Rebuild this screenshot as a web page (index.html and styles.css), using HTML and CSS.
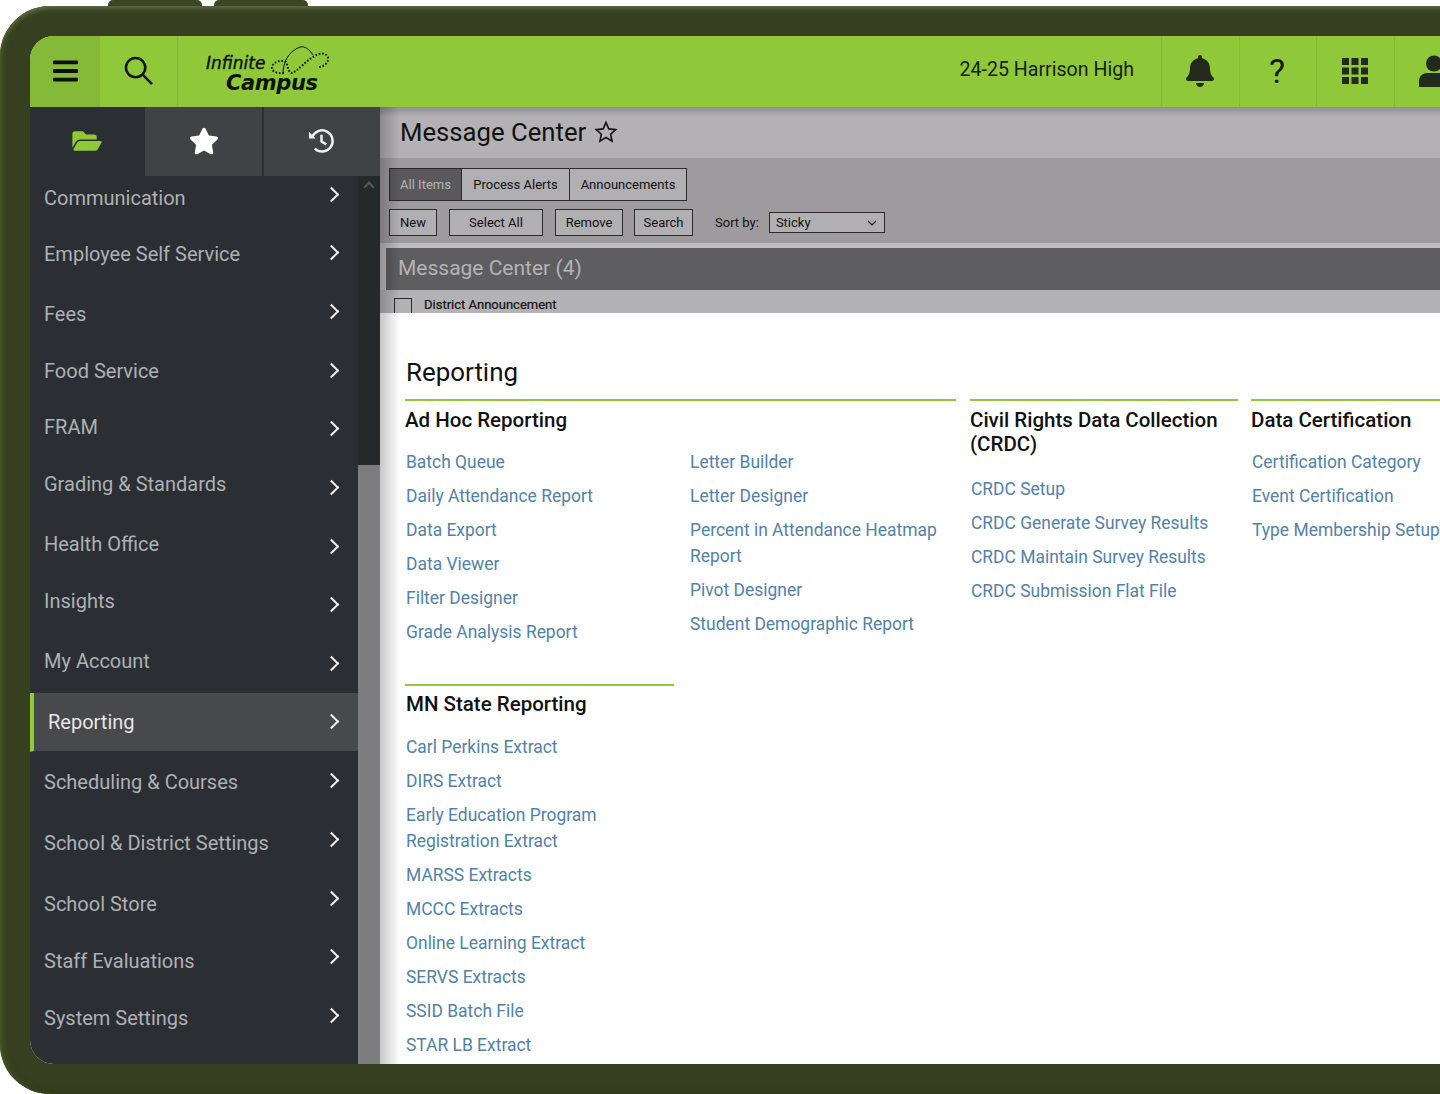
FILE: index.html
```html
<!DOCTYPE html>
<html lang="en">

<head>
    <meta charset="UTF-8">
    <meta name="viewport" content="width=device-width, initial-scale=1.0">
    <title>Infinite Campus - Reporting</title>
    <link rel="stylesheet" href="styles.css">
</head>

<body>
    <div class="notches">
        <span class="notch"></span>
        <span class="notch"></span>
    </div>
    <div class="device">
        <div class="screen">
            <header class="topbar">
                <div class="top-menu">
                    <svg class="ico-burger" viewBox="0 0 26 22"><rect width="26" height="4" rx="1" /><rect y="9" width="26" height="4" rx="1" /><rect y="18" width="26" height="4" rx="1" /></svg>
                </div>
                <div class="top-search">
                    <svg class="ico-search" viewBox="0 0 30 30"><circle cx="12" cy="12" r="10" /><path d="M19 19 L29 29" /></svg>
                </div>
                <div class="logo">
                    <div class="logo-text">
                        <span class="logo-top">Infinite</span>
                        <span class="logo-bottom">Campus</span>
                    </div>
                    <svg class="logo-loop" viewBox="0 0 62 34">
                        <path class="loop-solid" d="M14 28 C14 18 18 6 31 1 C36 0 40 3 44 9" />
                        <path class="loop-dots" d="M15 27 C8 28 2 25 3 21 C4 16 12 13 17 16 C19 18 18 24 22 27 C28 27 38 12 50 8 C56 6 60 10 59 14 C58 18 54 21 49 21" />
                    </svg>
                </div>
                <div class="school">24-25 Harrison High</div>
                <div class="top-cell">
                    <svg class="ico-bell" viewBox="0 0 448 512"><path d="M224 512c35.32 0 63.97-28.65 63.97-64H160.03c0 35.35 28.65 64 63.97 64zm215.39-149.71c-19.32-20.76-55.47-51.99-55.47-154.29 0-77.7-54.48-139.9-127.94-155.16V32c0-17.67-14.32-32-31.98-32s-31.98 14.33-31.98 32v20.84C118.56 68.1 64.08 130.3 64.08 208c0 102.3-36.15 133.53-55.47 154.29-6 6.45-8.66 14.16-8.61 21.71.11 16.4 12.98 32 32.1 32h383.8c19.12 0 32-15.6 32.1-32 .05-7.55-2.61-15.27-8.61-21.71z" /></svg>
                </div>
                <div class="top-cell help">?</div>
                <div class="top-cell">
                    <svg class="ico-grid" viewBox="0 0 26 26">
                        <rect width="7" height="7" /><rect x="9.5" width="7" height="7" /><rect x="19" width="7" height="7" />
                        <rect y="9.5" width="7" height="7" /><rect x="9.5" y="9.5" width="7" height="7" /><rect x="19" y="9.5" width="7" height="7" />
                        <rect y="19" width="7" height="7" /><rect x="9.5" y="19" width="7" height="7" /><rect x="19" y="19" width="7" height="7" />
                    </svg>
                </div>
                <div class="top-cell user">
                    <svg class="ico-user" viewBox="0 0 32 32"><circle cx="16" cy="8.5" r="8" /><path d="M1 32 V26 C1 21 5 18 9 18 H23 C27 18 31 21 31 26 V32 Z" /></svg>
                </div>
            </header>

            <div class="content">
                <aside class="sidebar">
                    <div class="side-tabs">
                        <div class="side-tab active">
                            <svg class="ico-folder" viewBox="0 0 576 512"><path d="M572.694 292.093L500.27 416.248A63.997 63.997 0 0 1 444.989 448H45.025c-18.523 0-30.064-20.093-20.731-36.093l72.424-124.155A64 64 0 0 1 152 256h399.964c18.523 0 30.064 20.093 20.73 36.093zM152 224h328v-48c0-26.51-21.49-48-48-48H272l-64-64H48C21.49 64 0 85.49 0 112v278.046l69.077-118.418C86.214 242.25 117.989 224 152 224z" /></svg>
                        </div>
                        <div class="side-tab fav">
                            <svg class="ico-star" viewBox="0 0 576 512"><path d="M259.3 17.8L194 150.2 47.9 171.5c-26.2 3.8-36.7 36.1-17.7 54.6l105.7 103-25 145.5c-4.5 26.3 23.2 46 46.4 33.7L288 439.6l130.7 68.7c23.2 12.2 50.9-7.4 46.4-33.7l-25-145.5 105.7-103c19-18.5 8.5-50.8-17.7-54.6L382 150.2 316.7 17.8c-11.7-23.6-45.6-23.9-57.4 0z" /></svg>
                        </div>
                        <div class="side-tab recent">
                            <svg class="ico-history" viewBox="0 0 28 28">
                                <path class="hist-line" d="M4.5 10 A11 11 0 1 1 7 22.5" />
                                <path class="hist-arrow" d="M1 5 L1 12 L8 12 Z" />
                                <path class="hist-line" d="M14 8 V15 L19 18" />
                            </svg>
                        </div>
                    </div>
                    <div class="side-body">
                        <nav class="menu">
                            <a class="menu-row first"><span class="shift-p3">Communication</span><i class="chev"></i></a>
                            <a class="menu-row"><span class="shift-p1">Employee Self Service</span><i class="chev"></i></a>
                            <a class="menu-row"><span class="shift-p3">Fees</span><i class="chev"></i></a>
                            <a class="menu-row"><span class="shift-p1">Food Service</span><i class="chev"></i></a>
                            <a class="menu-row"><span class="shift-m2">FRAM</span><i class="chev"></i></a>
                            <a class="menu-row"><span class="shift-m3">Grading &amp; Standards</span><i class="chev"></i></a>
                            <a class="menu-row"><span class="shift-m2">Health Office</span><i class="chev"></i></a>
                            <a class="menu-row"><span class="shift-m4">Insights</span><i class="chev"></i></a>
                            <a class="menu-row"><span class="shift-m3">My Account</span><i class="chev"></i></a>
                            <a class="menu-row current"><span>Reporting</span><i class="chev"></i></a>
                            <a class="menu-row"><span class="shift-p1">Scheduling &amp; Courses</span><i class="chev"></i></a>
                            <a class="menu-row"><span class="shift-p3">School &amp; District Settings</span><i class="chev"></i></a>
                            <a class="menu-row"><span class="shift-p6">School Store</span><i class="chev"></i></a>
                            <a class="menu-row"><span class="shift-p4">Staff Evaluations</span><i class="chev"></i></a>
                            <a class="menu-row"><span class="shift-p2">System Settings</span><i class="chev"></i></a>
                        </nav>
                        <div class="side-scroll">
                            <div class="scroll-thumb"><i class="scroll-up"></i></div>
                        </div>
                    </div>
                </aside>

                <main class="main">
                    <!-- greyed out message center behind the panel -->
                    <section class="messages">
                        <div class="msg-title">
                            <span>Message Center</span>
                            <svg class="ico-star-line" viewBox="0 0 24 24"><path d="M12 2.5 L14.8 8.9 L21.8 9.6 L16.6 14.2 L18.1 21.1 L12 17.5 L5.9 21.1 L7.4 14.2 L2.2 9.6 L9.2 8.9 Z" /></svg>
                        </div>
                        <div class="msg-tools">
                            <div class="msg-tabs">
                                <span class="msg-tab selected">All Items</span>
                                <span class="msg-tab t-alerts">Process Alerts</span>
                                <span class="msg-tab t-news">Announcements</span>
                            </div>
                            <div class="msg-actions">
                                <button class="btn b-new">New</button>
                                <button class="btn b-all">Select All</button>
                                <button class="btn b-remove">Remove</button>
                                <button class="btn b-search">Search</button>
                                <span class="sort-label">Sort by:</span>
                                <div class="sort-select">
                                    <span>Sticky</span>
                                    <svg class="ico-caret" viewBox="0 0 10 6"><path d="M1 1 L5 5 L9 1" /></svg>
                                </div>
                            </div>
                        </div>
                        <div class="msg-bar">Message Center (4)</div>
                        <div class="msg-row">
                            <span class="msg-check"></span>
                            <span>District Announcement</span>
                        </div>
                    </section>

                    <section class="report">
                        <h1 class="report-title">Reporting</h1>
                        <div class="report-cols">
                            <div class="group-wide">
                                <div class="block">
                                    <h2 class="block-head">Ad Hoc Reporting</h2>
                                    <div class="two-cols">
                                        <ul class="links">
                                            <li><a>Batch Queue</a></li>
                                            <li><a>Daily Attendance Report</a></li>
                                            <li><a>Data Export</a></li>
                                            <li><a>Data Viewer</a></li>
                                            <li><a>Filter Designer</a></li>
                                            <li><a>Grade Analysis Report</a></li>
                                        </ul>
                                        <ul class="links">
                                            <li><a>Letter Builder</a></li>
                                            <li><a>Letter Designer</a></li>
                                            <li><a>Percent in Attendance Heatmap Report</a></li>
                                            <li><a>Pivot Designer</a></li>
                                            <li><a>Student Demographic Report</a></li>
                                        </ul>
                                    </div>
                                </div>
                                <div class="block block-mn">
                                    <h2 class="block-head">MN State Reporting</h2>
                                    <ul class="links links-mn">
                                        <li><a>Carl Perkins Extract</a></li>
                                        <li><a>DIRS Extract</a></li>
                                        <li><a>Early Education Program Registration Extract</a></li>
                                        <li><a>MARSS Extracts</a></li>
                                        <li><a>MCCC Extracts</a></li>
                                        <li><a>Online Learning Extract</a></li>
                                        <li><a>SERVS Extracts</a></li>
                                        <li><a>SSID Batch File</a></li>
                                        <li><a>STAR LB Extract</a></li>
                                    </ul>
                                </div>
                            </div>
                            <div class="block block-crdc">
                                <h2 class="block-head">Civil Rights Data Collection (CRDC)</h2>
                                <ul class="links links-crdc">
                                    <li><a>CRDC Setup</a></li>
                                    <li><a>CRDC Generate Survey Results</a></li>
                                    <li><a>CRDC Maintain Survey Results</a></li>
                                    <li><a>CRDC Submission Flat File</a></li>
                                </ul>
                            </div>
                            <div class="block block-cert">
                                <h2 class="block-head">Data Certification</h2>
                                <ul class="links">
                                    <li><a>Certification Category</a></li>
                                    <li><a>Event Certification</a></li>
                                    <li><a>Type Membership Setup</a></li>
                                </ul>
                            </div>
                        </div>
                    </section>
                </main>
            </div>
        </div>
    </div>
</body>

</html>
```
FILE: styles.css
```css
* {
    box-sizing: border-box;
}

html,
body {
    margin: 0;
    height: 1094px;
    overflow: hidden;
    background-color: #fff;
}

body {
    font-family: 'Roboto', 'Liberation Sans', sans-serif;
    width: 1440px;
}

/* tablet frame */
.notches {
    display: flex;
    gap: 12px;
    height: 6px;
    padding-left: 108px;
}

.notch {
    width: 94px;
    height: 6px;
    background-color: #3b4722;
    border-top-left-radius: 5px;
    border-top-right-radius: 5px;
}

.device {
    width: 1520px;
    height: 1088px;
    padding: 30px;
    background-color: #364020;
    border-radius: 50px;
    box-shadow: inset 0 5px 4px -2px #5c6644, inset 4px 0 6px -2px #4b5c26, inset 0 -5px 6px -3px #2b3318;
}

.screen {
    display: flex;
    flex-direction: column;
    height: 1028px;
    background-color: #fff;
    border-radius: 24px 0 0 24px;
    overflow: hidden;
}

/* top green bar */
.topbar {
    display: flex;
    align-items: stretch;
    flex: 0 0 71px;
    background-color: #8fc93a;
}

.top-menu {
    display: flex;
    align-items: center;
    justify-content: center;
    width: 70px;
    padding: 0 0 2px 1px;
    background-color: #84ba38;
}

.ico-burger {
    width: 25px;
    height: 22px;
    fill: #0b0f05;
}

.top-search {
    display: flex;
    align-items: center;
    justify-content: center;
    width: 78px;
    padding: 0 0 2px 0;
    border-right: 1px solid #84ba38;
}

.ico-search {
    width: 29px;
    height: 29px;
    fill: none;
    stroke: #0f1408;
    stroke-width: 2.6;
}

.logo {
    display: flex;
    width: 160px;
    padding: 9px 0 0 28px;
    position: relative;
}

.logo-text {
    display: flex;
    flex-direction: column;
    font-family: 'DejaVu Sans', sans-serif;
    font-style: italic;
    color: #0d1206;
}

.logo-top {
    font-size: 17px;
    line-height: 18px;
    padding-top: 9px;
    -webkit-text-stroke: 0.4px #0d1206;
}

.logo-bottom {
    font-size: 21px;
    line-height: 22px;
    font-weight: bold;
    padding-left: 20px;
    letter-spacing: -0.4px;
}

.logo-loop {
    position: absolute;
    left: 91px;
    top: 10px;
    width: 62px;
    height: 34px;
    fill: none;
    stroke: #0d1206;
}

.loop-solid {
    stroke-width: 1;
}

.loop-dots {
    stroke-width: 2;
    stroke-dasharray: 1.6 1.8;
}

.school {
    display: flex;
    align-items: center;
    justify-content: flex-end;
    width: 823px;
    padding: 0 27px 4px 0;
    font-size: 19.6px;
    color: #162008;
}

.top-cell {
    display: flex;
    align-items: center;
    justify-content: center;
    width: 78px;
    padding: 0 2px 2px 0;
    border-left: 1px solid #84ba38;
    color: #14190c;
}

.help {
    font-size: 34px;
    width: 77px;
}

.ico-bell {
    width: 28px;
    height: 32px;
    fill: #23291b;
}

.ico-grid {
    width: 26px;
    height: 26px;
    fill: #23291b;
}

.user {
    justify-content: flex-start;
    padding-left: 23px;
    width: 60px;
}

.ico-user {
    flex: 0 0 32px;
    width: 32px;
    height: 32px;
    fill: #23291b;
}

/* below the bar */
.content {
    display: flex;
    flex: 1;
    min-height: 0;
}

.sidebar {
    display: flex;
    flex-direction: column;
    width: 350px;
    background-color: #2b2f33;
}

.side-tabs {
    display: flex;
    flex: 0 0 69px;
}

.side-tab {
    display: flex;
    align-items: center;
    justify-content: center;
    padding-bottom: 2px;
    background-color: #404245;
}

.side-tab.active {
    width: 115px;
    padding-right: 2px;
    background-color: #2b2f33;
}

.side-tab.fav {
    width: 117px;
}

.side-tab.recent {
    width: 116px;
    margin-left: 2px;
    padding-right: 2px;
}

.ico-folder {
    width: 30px;
    height: 26px;
    fill: #8fc93a;
}

.ico-star {
    width: 30px;
    height: 28px;
    fill: #fff;
}

.ico-history {
    width: 27px;
    height: 27px;
}

.hist-line {
    fill: none;
    stroke: #eee;
    stroke-width: 2.6;
}

.hist-arrow {
    fill: #eee;
}

.side-body {
    display: flex;
    flex: 1;
    min-height: 0;
}

.menu {
    display: flex;
    flex-direction: column;
    width: 328px;
}

.menu-row {
    display: flex;
    align-items: center;
    justify-content: space-between;
    flex: 0 0 58.7px;
    padding: 0 19px 0 14px;
    font-size: 20px;
    color: #aeb1b3;
}

.menu-row.first {
    flex-basis: 47.35px;
    padding-bottom: 10px;
}

.menu-row.current {
    padding-left: 14px;
    border-left: 4px solid #8fc93a;
    border-bottom: 1.5px solid #2b2f33;
    background-color: #48494b;
    color: #e6e6e6;
}

/* labels do not sit quite level with their arrows */
.shift-p1 {
    margin-top: 2px;
}

.shift-p2 {
    margin-top: 4px;
}

.shift-p3 {
    margin-top: 6px;
}

.shift-p4 {
    margin-top: 8px;
}

.shift-p6 {
    margin-top: 12px;
}

.shift-m2 {
    margin-bottom: 4px;
}

.shift-m3 {
    margin-bottom: 6px;
}

.shift-m4 {
    margin-bottom: 8px;
}

.chev {
    width: 11px;
    height: 11px;
    margin-right: 2px;
    border-top: 2.5px solid #f1f1f1;
    border-right: 2.5px solid #f1f1f1;
    transform: rotate(45deg);
}

.side-scroll {
    width: 22px;
    background-color: #7d7c7e;
}

.scroll-thumb {
    display: flex;
    justify-content: center;
    height: 289px;
    padding-top: 7px;
    background-color: #25292b;
}

.scroll-up {
    width: 8px;
    height: 8px;
    margin-top: 0;
    border-top: 2px solid #55585a;
    border-left: 2px solid #55585a;
    transform: rotate(45deg);
}

/* main area */
.main {
    flex: 1;
    min-width: 0;
    position: relative;
    overflow: hidden;
}

.main::after {
    content: "";
    position: absolute;
    top: 0;
    left: 0;
    bottom: 0;
    width: 20px;
    background: linear-gradient(to right, rgba(0, 0, 0, 0.22), rgba(0, 0, 0, 0));
}

.messages {
    display: flex;
    flex-direction: column;
    height: 206px;
    background-color: #bcbbbd;
    overflow: hidden;
}

.msg-title {
    display: flex;
    align-items: center;
    gap: 8px;
    flex: 0 0 51px;
    padding: 0 0 2px 20px;
    font-size: 25.7px;
    color: #111;
    background: linear-gradient(to bottom, #8f8e90, #b3b1b3 10px);
}

.ico-star-line {
    width: 24px;
    height: 24px;
    fill: none;
    stroke: #111;
    stroke-width: 1.6;
}

.msg-tools {
    display: flex;
    flex-direction: column;
    gap: 8px;
    flex: 0 0 85px;
    padding: 10px 0 0 9px;
    background-color: #9d9b9e;
    font-size: 13px;
    color: #111;
}

.msg-tabs {
    display: flex;
    height: 33px;
}

.msg-tab {
    display: flex;
    align-items: center;
    justify-content: center;
    width: 73px;
    border: 1px solid #2b2b2b;
    background-color: #b0afb1;
}

.msg-tab.selected {
    background-color: #59595b;
    color: #b5b5b5;
}

.msg-tab.t-alerts {
    width: 109px;
    margin-left: -1px;
}

.msg-tab.t-news {
    width: 118px;
    margin-left: -1px;
}

.msg-actions {
    display: flex;
    align-items: center;
    height: 27px;
}

.btn {
    height: 27px;
    padding: 0;
    border: 1px solid #2b2b2b;
    background-color: #b0afb1;
    font-family: inherit;
    font-size: 13px;
    color: #111;
}

.b-new {
    width: 48px;
}

.b-all {
    width: 94px;
    margin-left: 12px;
}

.b-remove {
    width: 68px;
    margin-left: 12px;
}

.b-search {
    width: 59px;
    margin-left: 11px;
}

.sort-label {
    margin-left: 22px;
}

.sort-select {
    display: flex;
    align-items: center;
    justify-content: space-between;
    width: 116px;
    height: 21px;
    margin-left: 10px;
    padding: 0 7px 0 6px;
    border: 1px solid #2b2b2b;
    background-color: #b0afb1;
}

.ico-caret {
    width: 10px;
    height: 6px;
    fill: none;
    stroke: #222;
    stroke-width: 1.2;
}

.msg-bar {
    display: flex;
    align-items: center;
    flex: 0 0 42px;
    margin: 5px 0 0 6px;
    padding: 0 0 3px 12px;
    background-color: #5e5e60;
    font-size: 21px;
    color: #b4b4b4;
}

.msg-row {
    display: flex;
    gap: 12px;
    flex: 1;
    padding: 7px 0 0 14px;
    background-color: #b3b2b4;
    font-size: 13px;
    color: #111;
    -webkit-text-stroke: 0.2px #111;
}

.msg-check {
    flex: 0 0 18px;
    height: 18px;
    margin-top: 1px;
    border: 1px solid #2b2b2b;
}

/* reporting panel */
.report {
    padding: 43px 0 0 25px;
}

.report-title {
    margin: 0 0 11px 1px;
    font-size: 25.9px;
    line-height: 32px;
    font-weight: 400;
    color: #111;
}

.report-cols {
    display: flex;
    align-items: flex-start;
    gap: 14px;
    width: 1100px;
}

.group-wide {
    flex: 0 0 551px;
}

.block {
    padding-top: 7px;
    border-top: 2px solid #8fc93a;
}

.block-crdc {
    flex: 0 0 268px;
}

.block-cert {
    flex: 0 0 268px;
    margin-left: -1px;
}

.block-mn {
    width: 269px;
    margin-top: 31px;
    padding-top: 6px;
}

.block-head {
    margin: 0 0 17px;
    font-size: 20.5px;
    line-height: 24px;
    font-weight: 500;
    color: #111;
}

.block-mn .block-head {
    margin-bottom: 18px;
    padding-left: 1px;
}

.two-cols {
    display: grid;
    grid-template-columns: 284px 1fr;
}

.links {
    margin: 0;
    padding: 0 0 0 1px;
    list-style: none;
    font-size: 17.45px;
    line-height: 26px;
    color: #5282a6;
}

.links li {
    margin-bottom: 8px;
}

.links-crdc {
    margin-top: 20px;
}
```
